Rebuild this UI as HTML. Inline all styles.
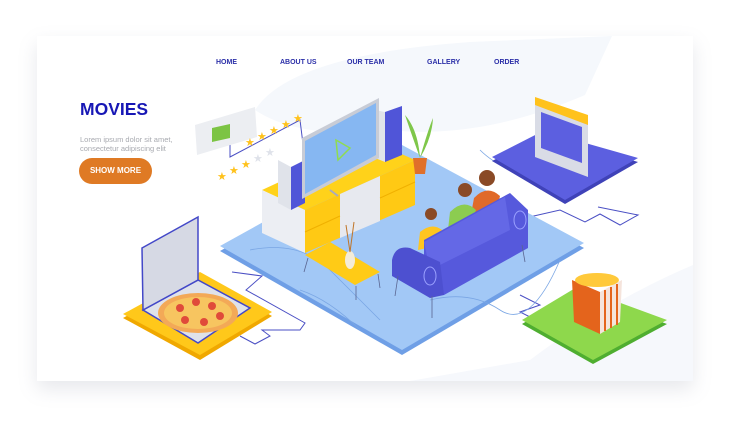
<!DOCTYPE html>
<html><head><meta charset="utf-8"><style>
html,body{margin:0;padding:0;background:#fff;}
body{width:740px;height:428px;position:relative;overflow:hidden;font-family:"Liberation Sans",sans-serif;}
.card{position:absolute;left:37px;top:36px;width:656px;height:345px;background:#fff;box-shadow:0 8px 18px rgba(120,130,150,0.18);}
.nav{position:absolute;top:59px;font-size:7px;font-weight:bold;color:#2b2fa8;}
h1{position:absolute;left:80px;top:99px;margin:0;font-size:17.5px;color:#1717b5;font-weight:bold;}
.lorem{position:absolute;left:80px;top:136px;font-size:7.5px;line-height:8.5px;color:#a8aab0;}
.btn{position:absolute;left:79px;top:158px;width:73px;height:26px;border-radius:13px;background:#df7a24;color:#fff;font-size:8px;font-weight:bold;text-align:center;line-height:26px;}
svg{position:absolute;left:0;top:0;}
</style></head><body>
<div class="card"></div>
<svg width="740" height="428" viewBox="0 0 740 428">
 <path d="M255 110 Q290 55 470 42 L612 36 L585 95 Q480 140 390 130 Q300 140 255 110 Z" fill="#f5f8fc"/>
 <path d="M410 381 L693 381 L693 265 Q610 300 530 360 Z" fill="#f6f8fc"/>
 <g fill="none" stroke="#4a4fc4" stroke-width="1">
  <polyline points="232,272 262,276 246,290 305,323 300,330 262,330 270,336 255,344 240,336"/>
  <polyline points="520,295 540,305 520,312 540,322"/>
  <polyline points="598,207 638,215 620,225 600,214 585,222 560,210 525,218"/>
  <polyline points="230,130 230,157 300,120 305,160"/>
 </g>
 <polygon points="220,251 402,150 584,248 402,355" fill="#6f9fe6"/>
 <polygon points="220,246 402,145 584,243 402,350" fill="#a2c8f6"/>
 <g fill="none" stroke="#7aa6e4" stroke-width="0.8">
  <path d="M250 250 Q300 240 330 270 T380 320"/>
  <path d="M430 300 Q470 290 500 310 T560 260"/>
  <path d="M480 150 Q500 170 540 180"/>
  <path d="M300 290 Q330 300 360 330"/>
 </g>
 <polygon points="262,190 370,140 415,160 305,210" fill="#ffd21a"/>
 <polygon points="262,190 305,210 305,253 262,233" fill="#eceef3"/>
 <polygon points="305,210 415,160 415,205 305,253" fill="#ffc914"/>
 <polygon points="340,194 380,176 380,221 340,238" fill="#e7e9ef"/>
 <line x1="305" y1="232" x2="340" y2="216" stroke="#f0b000" stroke-width="1"/>
 <line x1="380" y1="198" x2="415" y2="182" stroke="#f0b000" stroke-width="1"/>
 <polygon points="278,160 291,167 291,210 278,203" fill="#e0e3ea"/>
 <polygon points="291,167 305,160 305,203 291,210" fill="#5055d8"/>
 <polygon points="385,112 402,106 402,155 385,162" fill="#5055d8"/>
 <polygon points="375,110 385,112 385,162 375,158" fill="#e0e3ea"/>
 <polygon points="302,138 379,98 379,158 302,199" fill="#c8ccd6"/>
 <polygon points="305,141 376,103 376,155 305,194" fill="#86b7f2"/>
 <polygon points="336,140 350,148 338,160" fill="none" stroke="#8fdc50" stroke-width="1.5"/>
 <line x1="330" y1="190" x2="338" y2="196" stroke="#aab" stroke-width="2"/>
 <polygon points="413,158 427,158 425,174 415,174" fill="#e0702a"/>
 <path d="M420 158 Q410 130 405 115 Q418 130 420 158 M420 158 Q428 130 433 118 Q432 138 420 158" fill="#7fc74a"/>
 <polygon points="305,255 330,242 380,272 355,285" fill="#ffcb16"/>
 <g stroke="#5a6590" stroke-width="0.8"><line x1="308" y1="258" x2="304" y2="272"/><line x1="356" y1="286" x2="356" y2="300"/><line x1="378" y1="274" x2="380" y2="288"/></g>
 <ellipse cx="350" cy="260" rx="5" ry="9" fill="#f4ecd8"/>
 <path d="M350 252 L346 225 M350 252 L354 222" stroke="#c0762a" stroke-width="1"/>
 <circle cx="487" cy="178" r="8" fill="#8a4a26"/>
 <path d="M474 198 Q487 184 500 196 L495 215 L470 220 Z" fill="#e06a2a"/>
 <circle cx="465" cy="190" r="7" fill="#8a4a26"/>
 <path d="M450 212 Q464 198 476 210 L470 225 L448 230 Z" fill="#8ccc50"/>
 <circle cx="431" cy="214" r="6" fill="#8a4a26"/>
 <path d="M420 232 Q432 222 442 230 L436 246 L418 250 Z" fill="#ffc520"/>
 <polygon points="424,240 510,193 528,210 528,248 444,295 424,290" fill="#5659dc"/>
 <polygon points="424,242 505,197 510,230 430,270" fill="#6468e6"/>
 <path d="M392 260 Q395 245 410 248 L440 262 L444 295 L430 298 L392 276 Z" fill="#4d50d0"/>
 <ellipse cx="430" cy="276" rx="6" ry="9" fill="none" stroke="#9aa0ff" stroke-width="1"/>
 <ellipse cx="520" cy="220" rx="6" ry="9" fill="none" stroke="#9aa0ff" stroke-width="1"/>
 <g stroke="#5a6590" stroke-width="0.8"><line x1="398" y1="276" x2="395" y2="296"/><line x1="432" y1="296" x2="432" y2="318"/><line x1="522" y1="245" x2="525" y2="262"/></g>
 <polygon points="195,125 255,107 257,137 197,155" fill="#eceef2"/>
 <polygon points="212,128 230,124 230,138 212,142" fill="#7cc444"/>
 <g fill="#ffc21c" font-size="11" font-family="DejaVu Sans">
  <text x="245" y="146">★</text><text x="257" y="140">★</text><text x="269" y="134">★</text><text x="281" y="128">★</text><text x="293" y="122">★</text>
  <text x="217" y="180">★</text><text x="229" y="174">★</text><text x="241" y="168">★</text>
  <text x="253" y="162" fill="#dfe2ea">★</text><text x="265" y="156" fill="#dfe2ea">★</text>
 </g>
 <polygon points="123,318 200,276 272,316 200,360" fill="#f0a800"/>
 <polygon points="123,314 200,272 272,312 200,355" fill="#ffc81a"/>
 <polygon points="143,310 198,280 250,308 198,343" fill="#dfe2ea" stroke="#4348c8" stroke-width="1.5"/>
 <polygon points="142,248 198,217 198,280 143,310" fill="#d6d9e4" stroke="#4348c8" stroke-width="1.5"/>
 <ellipse cx="198" cy="313" rx="40" ry="20" fill="#f3a957"/>
 <ellipse cx="198" cy="313" rx="34" ry="16" fill="#f7c560"/>
 <g fill="#e04a3a"><circle cx="180" cy="308" r="4"/><circle cx="196" cy="302" r="4"/><circle cx="212" cy="306" r="4"/><circle cx="185" cy="320" r="4"/><circle cx="204" cy="322" r="4"/><circle cx="220" cy="316" r="4"/></g>
 <polygon points="492,161 543,135 638,162 565,204" fill="#3f42b8"/>
 <polygon points="492,157 543,131 638,158 565,200" fill="#5c5fe0"/>
 <polygon points="535,103 588,122 588,177 535,157" fill="#d9dce6"/>
 <polygon points="541,112 582,127 582,163 541,148" fill="#5c5fe0"/>
 <polygon points="535,97 588,115 588,125 535,105" fill="#ffc21c"/>
 <polygon points="522,324 577,291 667,324 593,364" fill="#4fae30"/>
 <polygon points="522,320 577,287 667,320 593,360" fill="#8ed84c"/>
 <polygon points="572,280 600,292 600,334 574,322" fill="#e4641c"/>
 <polygon points="600,292 622,280 620,322 600,334" fill="#f5e4dc"/>
 <g stroke="#e4641c" stroke-width="2"><line x1="605" y1="290" x2="605" y2="331"/><line x1="611" y1="287" x2="611" y2="328"/><line x1="617" y1="284" x2="617" y2="325"/></g>
 <ellipse cx="597" cy="280" rx="22" ry="7" fill="#ffc93a"/>
</svg>
<div class="nav" style="left:216px">HOME</div>
<div class="nav" style="left:280px">ABOUT US</div>
<div class="nav" style="left:347px">OUR TEAM</div>
<div class="nav" style="left:427px">GALLERY</div>
<div class="nav" style="left:494px">ORDER</div>
<h1>MOVIES</h1>
<div class="lorem">Lorem ipsum dolor sit amet,<br>consectetur adipiscing elit</div>
<div class="btn">SHOW MORE</div>
</body></html>
